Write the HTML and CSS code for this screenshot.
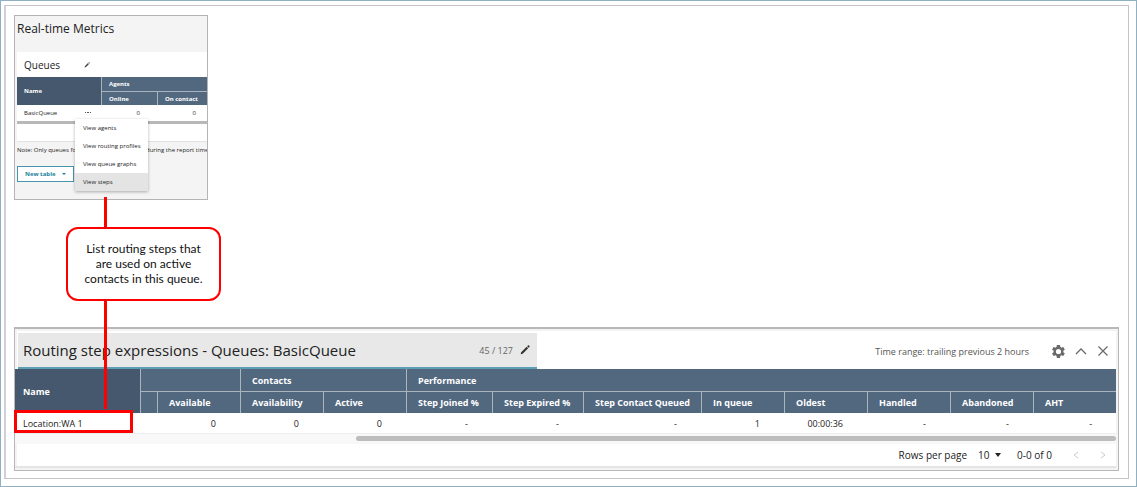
FILE: index.html
```html
<!DOCTYPE html>
<html lang="en">
<head>
    <meta charset="utf-8">
    <title>Real-time Metrics</title>
    <link rel="stylesheet" href="styles.css">
</head>
<body>
    <div class="page">
        <main class="frame">

            <section class="metrics">
                <h1>Real-time Metrics</h1>
                <div class="card">
                    <div class="card-title">
                        <h2>Queues</h2>
                        <button class="icon-btn" aria-label="Edit name">
                            <svg width="6" height="6" viewBox="0 0 12 12"><path d="M1 11l1-3 6-6 2 2-6 6zM9 1l1-1 2 2-1 1z" fill="#444"/></svg>
                        </button>
                    </div>
                    <table class="queues">
                        <colgroup><col class="q-name"><col><col></colgroup>
                        <thead>
                            <tr>
                                <th rowspan="2" class="name">Name</th>
                                <th colspan="2">Agents</th>
                            </tr>
                            <tr>
                                <th>Online</th>
                                <th>On contact</th>
                            </tr>
                        </thead>
                        <tbody>
                            <tr>
                                <td class="queue-cell">
                                    <div class="queue-name">
                                        <span>BasicQueue</span>
                                        <button class="icon-btn" aria-label="Queue actions">
                                            <svg width="6" height="2" viewBox="0 0 6 2"><path d="M0 0h1v1H0zM2 0h2v1H2zM5 0h1v1H5z" fill="#555"/></svg>
                                        </button>
                                    </div>
                                    <div class="menu">
                                        <button>View agents</button>
                                        <button>View routing profiles</button>
                                        <button>View queue graphs</button>
                                        <button class="active">View steps</button>
                                    </div>
                                </td>
                                <td>0</td>
                                <td>0</td>
                            </tr>
                        </tbody>
                    </table>
                    <div class="mini-scroll"></div>
                </div>
                <div class="note">
                    <span>Note: Only queues fo</span>
                    <span>during the report time</span>
                </div>
                <button class="new-table">New table
                    <svg width="4" height="2" viewBox="0 0 4 2"><path d="M0 0h4L2 2z" fill="#1b7f9e"/></svg>
                </button>
            </section>

            <p class="callout">List routing steps that<br>are used on active<br>contacts in this queue.</p>

            <section class="steps">
                <header class="steps-head">
                    <div class="title-edit">
                        <input type="text" aria-label="Table name" maxlength="127" value="Routing step expressions - Queues: BasicQueue">
                        <span class="count">45 / 127</span>
                        <svg width="10" height="10" viewBox="0 0 12 12"><path d="M.8 11.200l.6-2.400L8 2.200l1.800 1.800-6.600 6.600zM8.600 1.600L9.800.4q.3-.3.600 0l1.200 1.200q.3.3 0 .6L10.400 3.400z" fill="#333"/></svg>
                    </div>
                    <div class="tools">
                        <span>Time range: trailing previous 2 hours</span>
                        <button class="icon-btn" aria-label="Settings">
                            <svg width="13" height="13" viewBox="2 2 20 20"><path fill="#6a6a6a" fill-rule="evenodd" d="M19.400 13c0-.3.100-.6.100-1s0-.7-.1-1l2.100-1.600c.2-.2.200-.4.100-.6l-2-3.500c-.1-.2-.4-.3-.6-.2l-2.500 1a7 7 0 0 0-1.700-1l-.4-2.600c0-.3-.2-.5-.5-.5h-4c-.3 0-.5.200-.5.500L9 5.100a7 7 0 0 0-1.700 1l-2.500-1c-.2-.1-.5 0-.6.200l-2 3.500c-.1.200 0 .4.100.6L4.500 11c0 .3-.1.600-.1 1s0 .7.100 1l-2.200 1.600c-.2.200-.2.400-.1.600l2 3.500c.1.200.4.300.6.200l2.500-1a7 7 0 0 0 1.700 1l.4 2.600c0 .3.200.5.500.5h4c.3 0 .5-.2.500-.5l.4-2.600a7 7 0 0 0 1.700-1l2.500 1c.2.100.5 0 .6-.2l2-3.500c.1-.2 0-.4-.1-.6zM12 16a4 4 0 1 1 0-8 4 4 0 0 1 0 8z"/></svg>
                        </button>
                        <button class="icon-btn" aria-label="Collapse">
                            <svg width="12" height="12" viewBox="0 0 12 12"><path d="M1 9l5-5 5 5" fill="none" stroke="#6a6a6a" stroke-width="1.300"/></svg>
                        </button>
                        <button class="icon-btn" aria-label="Close">
                            <svg width="12" height="12" viewBox="0 0 12 12"><path d="M1.500 1.500l9 9M10.500 1.500l-9 9" fill="none" stroke="#6a6a6a" stroke-width="1.200"/></svg>
                        </button>
                    </div>
                </header>

                <table class="step-table">
                    <colgroup>
                        <col class="w-name"><col class="w-cut"><col><col><col>
                        <col class="w-joined"><col class="w-expired"><col class="w-queued">
                        <col><col><col><col><col>
                    </colgroup>
                    <thead>
                        <tr>
                            <th rowspan="2" class="name">Name</th>
                            <th colspan="2"></th>
                            <th colspan="2">Contacts</th>
                            <th colspan="8">Performance</th>
                        </tr>
                        <tr>
                            <th></th>
                            <th>Available</th>
                            <th>Availability</th>
                            <th>Active</th>
                            <th>Step Joined %</th>
                            <th>Step Expired %</th>
                            <th>Step Contact Queued</th>
                            <th>In queue</th>
                            <th>Oldest</th>
                            <th>Handled</th>
                            <th>Abandoned</th>
                            <th>AHT</th>
                        </tr>
                    </thead>
                    <tbody>
                        <tr>
                            <td class="location">Location:WA 1</td>
                            <td></td>
                            <td>0</td>
                            <td>0</td>
                            <td>0</td>
                            <td>-</td>
                            <td>-</td>
                            <td>-</td>
                            <td>1</td>
                            <td>00:00:36</td>
                            <td>-</td>
                            <td>-</td>
                            <td>-</td>
                        </tr>
                    </tbody>
                </table>
                <div class="scrollbar"><div class="thumb"></div></div>

                <footer class="pager">
                    <label for="rows">Rows per page</label>
                    <span class="rows">
                        <select id="rows"><option>10</option><option>25</option></select>
                        <svg width="6" height="4" viewBox="0 0 6 4"><path d="M0 0h6L3 4z" fill="#222"/></svg>
                    </span>
                    <span class="range">0-0 of 0</span>
                    <button class="icon-btn" aria-label="Previous page" disabled>
                        <svg width="6" height="8" viewBox="0 0 6 8"><path d="M5 1L1 4l4 3" fill="none" stroke="#c8ccd0"/></svg>
                    </button>
                    <button class="icon-btn" aria-label="Next page" disabled>
                        <svg width="6" height="8" viewBox="0 0 6 8"><path d="M1 1l4 3-4 3" fill="none" stroke="#c8ccd0"/></svg>
                    </button>
                </footer>
            </section>

        </main>
    </div>
</body>
</html>
```

FILE: styles.css
```css
*, *::before, *::after {
    box-sizing: border-box;
}

body {
    margin: 0;
    background: #fff;
    color: #222;
    font-family: "Open Sans", "Noto Sans", sans-serif;
    font-size: 9px;
}

h1, h2, p {
    margin: 0;
    font-weight: normal;
}

button, input, select {
    font: inherit;
    color: inherit;
    border: none;
    background: none;
    padding: 0;
    margin: 0;
}

svg {
    display: block;
}

table {
    border-collapse: separate;
    border-spacing: 0;
    table-layout: fixed;
    width: 100%;
}

th, td {
    padding: 0;
    white-space: nowrap;
}

th {
    background: #52687f;
    color: #fff;
    text-align: left;
    border-left: 1px solid #a9b4bf;
}

thead tr + tr th {
    border-top: 1px solid #a9b4bf;
}

th.name {
    background: #45586d;
    border-left: none;
}

.page {
    min-height: 100vh;
    border: 1px solid #8fb1c1;
    padding: 4px 7px 6px 3px;
}

.frame {
    border: 1px solid #c4c4c4;
    border-left: 2px solid #d2d0d6;
    padding: 9px 9px 7px 8px;
}

/* queue list */
.metrics {
    width: 194px;
    height: 185px;
    border: 1px solid #b4b4b4;
    background: #f4f4f4;
    padding-left: 2px;
    font-size: 6px;
    overflow: hidden;
}

.metrics h1 {
    height: 36px;
    font-size: 12px;
    line-height: 25px;
}

.card {
    background: #fff;
    height: 90px;
    border-bottom: 1px solid #e2e2e2;
}

.card-title {
    display: flex;
    align-items: center;
    gap: 24px;
    height: 25px;
    padding-left: 7px;
}

.card-title h2 {
    font-size: 10px;
}

/* last column runs out of view on the right */
.queues {
    width: 196px;
}

.queues th {
    height: 14px;
    padding-left: 7px;
}

.queues td {
    height: 16px;
    padding-right: 17px;
    text-align: right;
}

.queues .queue-cell {
    position: relative;
    padding: 0 10px 0 7px;
}

.queues col {
    width: 56px;
}

.queues .q-name {
    width: 84px;
}

.queue-name {
    display: flex;
    justify-content: space-between;
    align-items: center;
}

.menu {
    position: absolute;
    z-index: 2;
    top: 14px;
    left: 58px;
    width: 73px;
    background: #fff;
    box-shadow: 0 1px 3px rgba(0, 0, 0, 0.3);
}

.menu button {
    display: block;
    width: 100%;
    height: 18px;
    padding-left: 8px;
    text-align: left;
    white-space: nowrap;
}

.menu .active {
    background: #e4e4e4;
}

.mini-scroll {
    height: 3px;
    background: #b8b8b8;
}

.note {
    display: flex;
    height: 24px;
    line-height: 16px;
    white-space: nowrap;
}

.note span:first-child {
    flex: 0 0 129px;
}

.new-table {
    display: flex;
    align-items: center;
    gap: 6px;
    height: 16px;
    padding: 0 7px;
    border: 1px solid #4796ad;
    background: #fff;
    color: #1b7f9e;
    font-weight: bold;
}

/* callout with its two connector lines */
.callout {
    position: relative;
    z-index: 3;
    width: 155px;
    margin: 27px 0 26px 52px;
    padding: 12px 0 13px;
    border: 2px solid #f00;
    border-radius: 12px;
    background: #fff;
    color: #111;
    font-family: Lato, sans-serif;
    font-size: 12px;
    line-height: 15px;
    text-align: center;
}

.callout::before,
.callout::after {
    content: "";
    position: absolute;
    left: 36px;
    width: 3px;
    background: #f00;
}

.callout::before {
    bottom: 100%;
    height: 32px;
}

.callout::after {
    top: 100%;
    height: 110px;
}

/* routing steps */
.steps {
    border: 1px solid #b8b8b8;
    border-top-width: 2px;
    box-shadow: inset 0 0 0 2px #f3f3f3;
    padding: 4px 2px 2px 0;
}

.steps-head {
    display: flex;
    justify-content: space-between;
    align-items: center;
}

.title-edit {
    display: flex;
    align-items: center;
    gap: 7px;
    width: 48%;
    max-width: 519px;
    height: 36px;
    margin-left: 3px;
    padding: 0 7px 0 5px;
    border-bottom: 2px solid #5b9fb5;
    background: #e8e8e8;
}

.title-edit input {
    flex: 1;
    min-width: 0;
    font-size: 15px;
}

.count {
    color: #666;
}

.tools {
    display: flex;
    align-items: center;
    gap: 10px;
    padding-right: 7px;
    color: #555;
}

.tools span {
    margin-right: 13px;
}

.step-table col {
    width: 83px;
}

.step-table .w-name {
    width: 125px;
}

.step-table .w-cut {
    width: 17px;
}

.step-table .w-joined {
    width: 86px;
}

.step-table .w-expired {
    width: 91px;
}

.step-table .w-queued {
    width: 118px;
}

.step-table th {
    height: 22px;
    padding-left: 11px;
}

.step-table th.name {
    padding-left: 8px;
}

.step-table td {
    height: 20px;
    padding-right: 24px;
    text-align: right;
}

.step-table td.location {
    position: relative;
    padding-left: 8px;
    text-align: left;
}

.location::before {
    content: "";
    position: absolute;
    top: -3px;
    left: -1px;
    width: 119px;
    height: 23px;
    border: 3px solid #f00;
}

.scrollbar {
    height: 11px;
    padding: 2px 0;
    background: #f8f8f8;
    border-top: 1px solid #eee;
}

.thumb {
    width: 69%;
    height: 5px;
    margin-left: auto;
    border-radius: 3px;
    background: #bdbdbd;
}

.pager {
    display: flex;
    justify-content: flex-end;
    align-items: center;
    height: 24px;
    padding-right: 10px;
    border-bottom: 2px solid #e4e4e4;
    font-size: 10px;
}

.rows {
    display: flex;
    align-items: center;
    gap: 5px;
    margin: 0 16px 0 11px;
}

.rows select {
    appearance: none;
}

.pager .icon-btn {
    margin-left: 21px;
}
```
